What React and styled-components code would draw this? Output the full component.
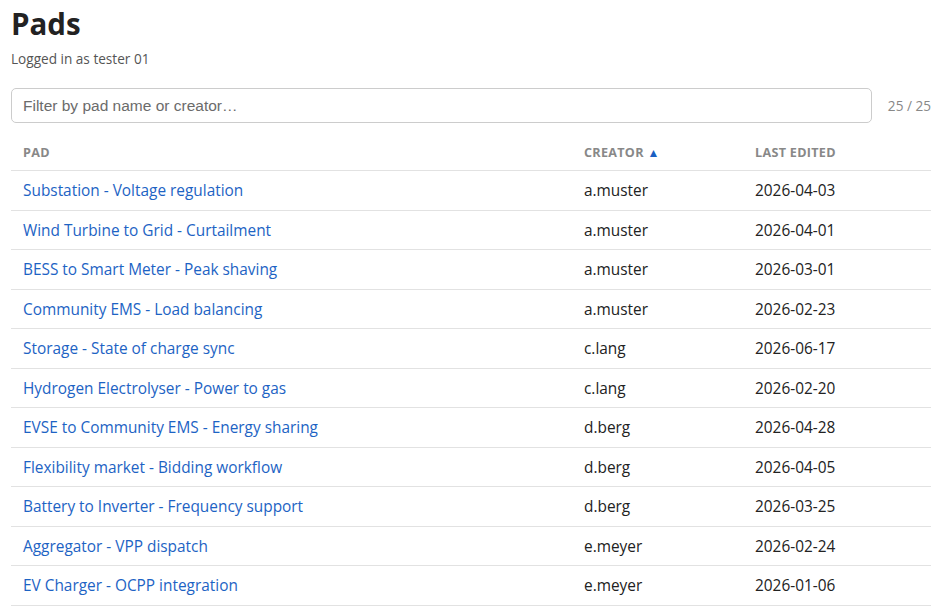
import React from 'react';
import styled, { createGlobalStyle } from 'styled-components';

const GlobalStyle = createGlobalStyle`
  body {
    margin: 0;
    background: #fff;
    font-family: "Open Sans", "Noto Sans", sans-serif;
    color: #222;
  }
`;

const pads = [
  { name: 'Substation - Voltage regulation', creator: 'a.muster', edited: '2026-04-03' },
  { name: 'Wind Turbine to Grid - Curtailment', creator: 'a.muster', edited: '2026-04-01' },
  { name: 'BESS to Smart Meter - Peak shaving', creator: 'a.muster', edited: '2026-03-01' },
  { name: 'Community EMS - Load balancing', creator: 'a.muster', edited: '2026-02-23' },
  { name: 'Storage - State of charge sync', creator: 'c.lang', edited: '2026-06-17' },
  { name: 'Hydrogen Electrolyser - Power to gas', creator: 'c.lang', edited: '2026-02-20' },
  { name: 'EVSE to Community EMS - Energy sharing', creator: 'd.berg', edited: '2026-04-28' },
  { name: 'Flexibility market - Bidding workflow', creator: 'd.berg', edited: '2026-04-05' },
  { name: 'Battery to Inverter - Frequency support', creator: 'd.berg', edited: '2026-03-25' },
  { name: 'Aggregator - VPP dispatch', creator: 'e.meyer', edited: '2026-02-24' },
  { name: 'EV Charger - OCPP integration', creator: 'e.meyer', edited: '2026-01-06' },
];

const App = () => {
  return (
    <Page>
      <GlobalStyle />
      <Title>Pads</Title>
      <Subtitle>Logged in as tester 01</Subtitle>
      <FilterRow>
        <FilterInput placeholder="Filter by pad name or creator…" />
        <Count>25 / 25</Count>
      </FilterRow>
      <Table>
        <colgroup>
          <col style={{ width: '561px' }} />
          <col style={{ width: '171px' }} />
          <col />
        </colgroup>
        <thead>
          <tr>
            <Th>Pad</Th>
            <Th>
              Creator <SortArrow>▲</SortArrow>
            </Th>
            <Th>Last edited</Th>
          </tr>
        </thead>
        <tbody>
          {pads.map((p) => (
            <tr key={p.name}>
              <Td>
                <PadLink href="#">{p.name}</PadLink>
              </Td>
              <Td>{p.creator}</Td>
              <Td>{p.edited}</Td>
            </tr>
          ))}
        </tbody>
      </Table>
    </Page>
  );
};

const Page = styled.div`
  padding: 4px 5px 0 11px;
`;
const Title = styled.h1`
  margin: 0;
  font-size: 29.5px;
  line-height: 40px;
  font-weight: 700;
  color: #222;
`;
const Subtitle = styled.p`
  margin: 6px 0 0;
  font-size: 13.6px;
  line-height: 18px;
  color: #555;
`;
const FilterRow = styled.div`
  display: flex;
  align-items: center;
  gap: 16px;
  margin-top: 20px;
`;
const FilterInput = styled.input`
  flex: 1;
  height: 35px;
  box-sizing: border-box;
  padding: 0 11px;
  border: 1px solid #ccc;
  border-radius: 5px;
  font-family: "Liberation Sans", Arial, sans-serif;
  font-size: 15.5px;
  color: #333;
  outline: none;
  &::placeholder {
    color: #6b6b6b;
  }
`;
const Count = styled.span`
  font-size: 13.6px;
  color: #888;
  white-space: nowrap;
`;
const Table = styled.table`
  width: 920px;
  margin-top: 10px;
  border-collapse: collapse;
  table-layout: fixed;
`;
const Th = styled.th`
  text-align: left;
  padding: 11px 12px 9px;
  font-size: 12.6px;
  line-height: 17px;
  font-weight: 700;
  letter-spacing: 0.3px;
  text-transform: uppercase;
  color: #888;
  border-bottom: 1px solid #e2e2e2;
`;
const SortArrow = styled.span`
  color: #1a5fc2;
  font-size: 12px;
`;
const Td = styled.td`
  padding: 11px 12px 9px;
  font-size: 15.4px;
  line-height: 18.55px;
  color: #222;
  border-bottom: 1px solid #e2e2e2;
  white-space: nowrap;
`;
const PadLink = styled.a`
  color: #1d63c4;
  text-decoration: none;
`;

export default App;
